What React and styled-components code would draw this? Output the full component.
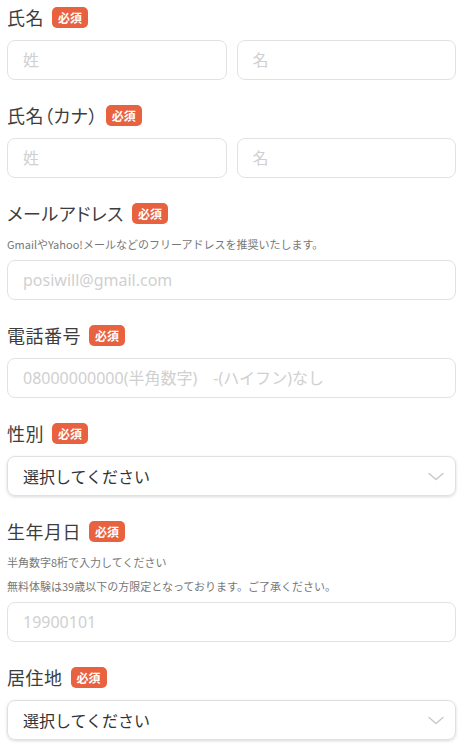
import React from "react";
import styled, { createGlobalStyle } from "styled-components";

const fields = [
  { label: "氏名", type: "pair", placeholders: ["姓", "名"] },
  { label: "氏名（カナ）", type: "pair", placeholders: ["姓", "名"] },
  {
    label: "メールアドレス",
    type: "text",
    hints: ["GmailやYahoo!メールなどのフリーアドレスを推奨いたします。"],
    placeholder: "posiwill@gmail.com",
  },
  { label: "電話番号", type: "text", placeholder: "08000000000(半角数字)　-(ハイフン)なし" },
  { label: "性別", type: "select" },
  {
    label: "生年月日",
    type: "text",
    hints: ["半角数字8桁で入力してください", "無料体験は39歳以下の方限定となっております。ご了承ください。"],
    placeholder: "19900101",
  },
  { label: "居住地", type: "select" },
];

const Chevron = () => (
  <svg width="16" height="9" viewBox="0 0 16 9" fill="none">
    <path d="M1 1.5L8 7.5L15 1.5" stroke="#c8c8c8" strokeWidth="1.4" strokeLinecap="round" strokeLinejoin="round" />
  </svg>
);

const App = () => {
  return (
    <>
      <GlobalStyle />
      <Formulario>
        {fields.map((campo) => (
          <Seccion key={campo.label}>
            <Etiqueta>
              <TextoEtiqueta>{campo.label}</TextoEtiqueta>
              <Requerido>必須</Requerido>
            </Etiqueta>
            {campo.hints && (
              <Ayudas>
                {campo.hints.map((h) => (
                  <Ayuda key={h}>{h}</Ayuda>
                ))}
              </Ayudas>
            )}
            {campo.type === "pair" && (
              <Fila>
                {campo.placeholders.map((p) => (
                  <Input key={p} type="text" placeholder={p} />
                ))}
              </Fila>
            )}
            {campo.type === "text" && <Input type="text" placeholder={campo.placeholder} />}
            {campo.type === "select" && (
              <Selector>
                <span>選択してください</span>
                <Chevron />
              </Selector>
            )}
          </Seccion>
        ))}
      </Formulario>
    </>
  );
};

const GlobalStyle = createGlobalStyle`
  * {
    box-sizing: border-box;
  }
  body {
    margin: 0;
    background: #fff;
    font-family: "Noto Sans", "Noto Sans CJK JP", sans-serif;
  }
`;

const Formulario = styled.form`
  width: 465px;
  padding: 2px 9px 0 7px;
`;

const Seccion = styled.div`
  margin-bottom: 20px;
`;

const Etiqueta = styled.div`
  display: flex;
  align-items: center;
  height: 30px;
  margin-bottom: 8px;
`;

const TextoEtiqueta = styled.span`
  font-size: 18px;
  color: #3d3d3d;
  font-family: "Noto Sans CJK JP", sans-serif;
  font-feature-settings: "palt";
  letter-spacing: 0.5px;
`;

const Requerido = styled.span`
  margin-left: 8px;
  padding: 0 6px;
  height: 21px;
  line-height: 21px;
  border-radius: 5px;
  background: #e8623f;
  color: #fff;
  font-size: 12px;
  font-weight: bold;
  font-family: "Noto Sans CJK JP", sans-serif;
`;

const Ayudas = styled.div`
  display: flex;
  flex-direction: column;
  gap: 8px;
  margin-bottom: 8px;
`;

const Ayuda = styled.p`
  margin: 0;
  font-size: 11px;
  line-height: 16px;
  color: #777;
  font-family: "Noto Sans CJK JP", sans-serif;
`;

const Fila = styled.div`
  display: grid;
  grid-template-columns: 1fr 1fr;
  gap: 10px;
`;

const Input = styled.input`
  display: block;
  width: 100%;
  height: 40px;
  padding: 0 15px;
  border: 1px solid #e2e2e2;
  border-radius: 8px;
  font-family: "Noto Sans", "Noto Sans CJK JP", sans-serif;
  font-size: 16px;
  color: #333;
  outline: none;

  &::placeholder {
    color: #d0d0d0;
  }
`;

const Selector = styled.div`
  display: flex;
  align-items: center;
  justify-content: space-between;
  height: 40px;
  padding: 0 11px 0 15px;
  border: 1px solid #e0e0e0;
  border-radius: 8px;
  box-shadow: 0 1px 3px rgba(0, 0, 0, 0.15);
  font-size: 16px;
  color: #333;
  font-family: "Noto Sans CJK JP", sans-serif;
`;

export default App;
